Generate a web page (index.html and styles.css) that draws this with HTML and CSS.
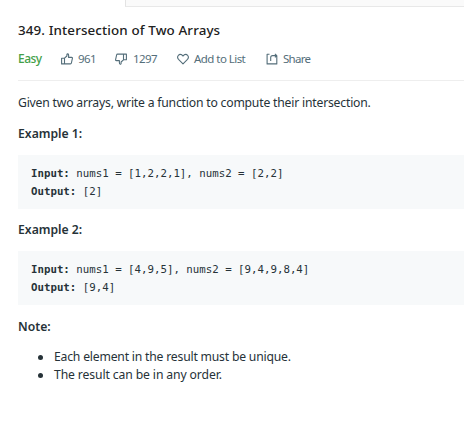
FILE: index.html
```html
<!DOCTYPE html>
<html lang="en">
<head>
<meta charset="utf-8">
<title>Intersection of Two Arrays</title>
<link rel="stylesheet" href="styles.css">
</head>
<body>
<div class="tabs"><div class="tab-active"></div><div class="tab-rest"></div></div>
<main class="problem">
  <h1 class="title"><span>349. Intersection of Two Arrays</span></h1>
  <div class="meta">
    <span class="difficulty">Easy</span>
    <button class="action like"><svg width="12" height="12" viewBox="0 0 12 12"><path d="M.6 5.2h2.9v5.7H.6zM3.5 5.2 5.9 3V1.4c0-1 1.7-.8 1.7.5v2.5h3.1c.5 0 .8.4.7.9l-1 4.7c-.1.6-.5.9-1 .9H3.5"/></svg><span>961</span></button>
    <button class="action dislike"><svg width="12" height="12" viewBox="0 0 12 12"><path d="M11.4 6.8H8.5V1.1h2.9zM8.5 6.8 6.1 9v1.6c0 1-1.7.8-1.7-.5V7.6H1.3c-.5 0-.8-.4-.7-.9l1-4.7c.1-.6.5-.9 1-.9h5.9"/></svg><span>1297</span></button>
    <button class="action list"><svg width="12" height="12" viewBox="0 0 12 12"><path d="M6 10.9 1.5 6.3C-.8 3.8 2.1.2 4.8 1.8L6 3l1.2-1.2c2.7-1.6 5.6 2 3.3 4.5z"/></svg><span>Add to List</span></button>
    <button class="action share"><svg width="12" height="12" viewBox="0 0 12 12"><path d="M3.5 1.2H1.1v9.7h9.7V2.6M4.7 8V4.6c0-1.2.6-2 1.9-2h4.2M8.9.8l1.9 1.8-1.9 1.8"/></svg><span>Share</span></button>
  </div>
  <div class="content">
    <p class="intro">Given two arrays, write a function to compute their intersection.</p>
    <h2>Example 1:</h2>
<pre><b>Input:</b> nums1 = [1,2,2,1], nums2 = [2,2]
<b>Output:</b> [2]</pre>
    <h2>Example 2:</h2>
<pre><b>Input:</b> nums1 = [4,9,5], nums2 = [9,4,9,8,4]
<b>Output:</b> [9,4]</pre>
    <h2 class="note">Note:</h2>
    <ul>
      <li>Each element in the result must be unique.</li>
      <li class="order">The result can be in any order.</li>
    </ul>
  </div>
</main>
</body>
</html>
```
FILE: styles.css
```css
* { box-sizing: border-box; }
body {
  margin: 0;
  background: #fff;
  color: #263238;
  font-family: "Noto Sans", "Open Sans", sans-serif;
  font-size: 12.2px;
  line-height: 18px;
  overflow: hidden;
}
.tabs { display: flex; height: 7px; }
.tab-active { width: 125px; }
.tab-rest {
  flex: 1;
  background: #fafafa;
  border-left: 1px solid #e3e3e3;
  border-bottom: 1px solid #e8e8e8;
}
.problem { padding: 13px 0 0 18px; }
.title {
  margin: 0;
  font-size: 13.4px;
  font-weight: 500;
  line-height: 20px;
  letter-spacing: .12px;
  color: #212121;
  white-space: nowrap;
}
.meta {
  display: flex;
  height: 41px;
  padding-top: 10px;
  border-bottom: 1px solid #eee;
  font-size: 11.5px;
}
.difficulty {
  width: 43px;
  color: #43a047;
  font-size: 12px;
  font-weight: 500;
  letter-spacing: -.55px;
}
.action {
  display: flex;
  align-items: center;
  gap: 5px;
  height: 18px;
  padding: 0;
  border: 0;
  background: none;
  color: #546e7a;
  font: inherit;
  white-space: nowrap;
}
.action svg {
  fill: none;
  stroke: #546e7a;
  stroke-width: 1.1;
  stroke-linejoin: round;
}
.like { width: 54px; }
.like, .dislike { letter-spacing: -.55px; }
.dislike { width: 62px; gap: 6px; }
.list { width: 89px; letter-spacing: -.55px; }
.share { letter-spacing: -.7px; }
.content { padding-top: 13px; }
.intro { margin: 0 0 13px; letter-spacing: -.2px; }
h2 {
  margin: 12px 0;
  font-size: 12.2px;
  line-height: 18px;
  font-weight: 600;
}
.note { margin-top: 13px; }
pre {
  height: 54px;
  margin: 0;
  padding: 10px 13px 8px;
  background: #f7f9fa;
  font-family: "DejaVu Sans Mono", monospace;
  font-size: 10.75px;
  line-height: 18px;
}
pre b { font-weight: 600; }
ul { margin: 0; padding: 0 0 0 20px; list-style: none; }
li { display: flex; align-items: center; letter-spacing: -.2px; }
li::before {
  content: "";
  width: 5px;
  height: 5px;
  margin-right: 11px;
  border-radius: 50%;
  background: #263238;
}
.order { letter-spacing: -.12px; }
```
